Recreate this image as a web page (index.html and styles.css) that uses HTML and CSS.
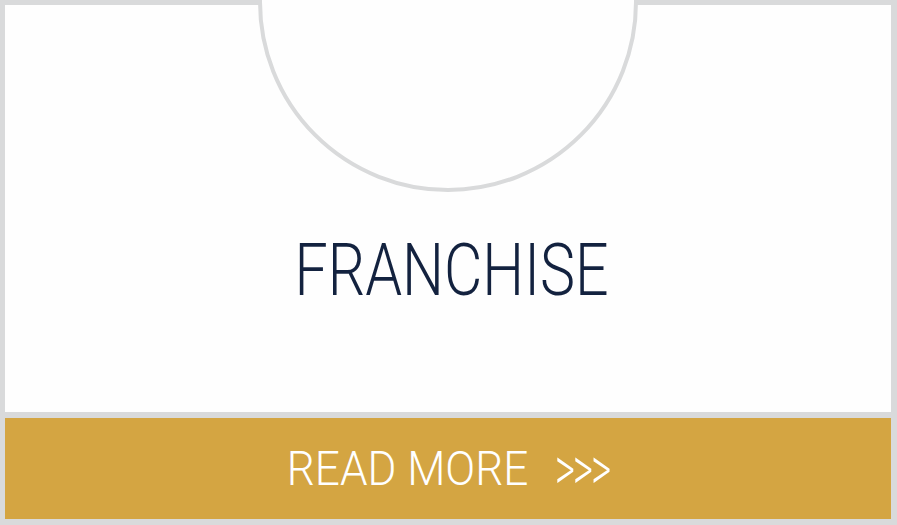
FILE: index.html
```html
<!DOCTYPE html>
<html>
<head>
<meta charset="utf-8">
<link rel="stylesheet" href="styles.css">
</head>
<body>
<div class="card">
  <div class="panel">
    <div class="circle"></div>
    <h2 class="title"><span class="squeeze">FRANCHISE</span></h2>
  </div>
  <a class="more" href="#"><span class="squeeze2">READ MORE</span><span class="arrows">&gt;&gt;&gt;</span></a>
</div>
</body>
</html>
```
FILE: styles.css
```css
html, body {
  margin: 0;
  padding: 0;
  background: #d9dadb;
}
.card {
  width: 897px;
  height: 525px;
  box-sizing: border-box;
  padding: 5px 6px 6px 5px;
  display: flex;
  flex-direction: column;
  gap: 6px;
  overflow: hidden;
  position: relative;
}
.panel {
  height: 407px;
  background: #fefefe;
  display: flex;
  flex-direction: column;
  align-items: center;
  padding-top: 230px;
  box-sizing: border-box;
}
.circle {
  position: absolute;
  left: 258px;
  top: -188px;
  width: 380px;
  height: 380px;
  box-sizing: border-box;
  border-radius: 50%;
  border: 4px solid #d9dadb;
  background: #fefefe;
}
.title {
  margin: 0;
  font-family: Roboto, "Liberation Sans", sans-serif;
  font-weight: 300;
  font-size: 72px;
  line-height: 1;
  color: #13223f;
}
.squeeze {
  display: inline-block;
  transform: scaleX(0.82);
  margin-left: 6px;
}
.more {
  height: 101px;
  background: #d4a542;
  display: flex;
  align-items: center;
  justify-content: center;
  text-decoration: none;
  font-family: Roboto, "Liberation Sans", sans-serif;
  font-weight: 300;
  font-size: 49px;
  line-height: 1;
  color: #ffffff;
}
.squeeze2 {
  display: inline-block;
  transform: scaleX(0.9);
  transform-origin: right center;
  white-space: pre;
}
.arrows {
  display: inline-block;
  font-size: 62px;
  letter-spacing: -3px;
  transform: scaleX(0.62);
  transform-origin: left center;
  margin-left: 27px;
  margin-right: -7px;
}
```
